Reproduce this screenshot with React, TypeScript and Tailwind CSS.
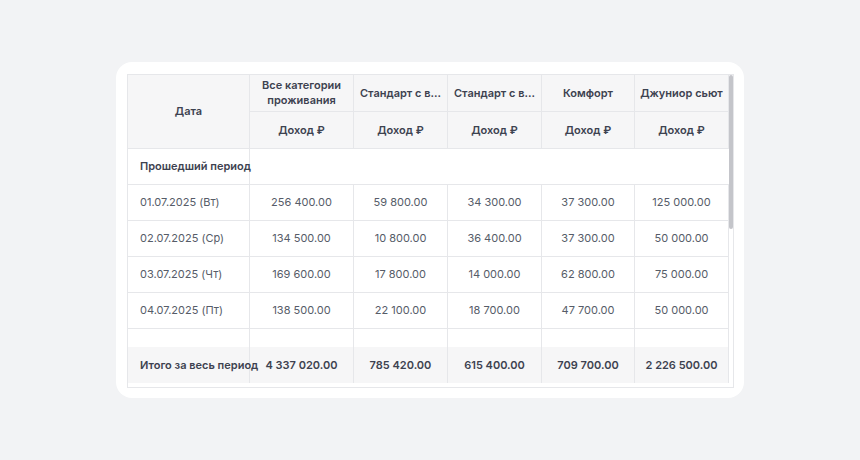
import React from 'react';

const cols = ['Все категории проживания', 'Стандарт с в...', 'Стандарт с в...', 'Комфорт', 'Джуниор сьют'];
const widths = ['w-[122px]', 'w-[104px]', 'w-[94px]', 'w-[94px]', 'w-[93px]', 'w-[94px]'];

const rows: [string, string[]][] = [
  ['01.07.2025 (Вт)', ['256 400.00', '59 800.00', '34 300.00', '37 300.00', '125 000.00']],
  ['02.07.2025 (Ср)', ['134 500.00', '10 800.00', '36 400.00', '37 300.00', '50 000.00']],
  ['03.07.2025 (Чт)', ['169 600.00', '17 800.00', '14 000.00', '62 800.00', '75 000.00']],
  ['04.07.2025 (Пт)', ['138 500.00', '22 100.00', '18 700.00', '47 700.00', '50 000.00']],
];
const totals = ['4 337 020.00', '785 420.00', '615 400.00', '709 700.00', '2 226 500.00'];

const cell = 'flex items-center justify-center border-r border-[#e6e7ea] text-center whitespace-nowrap';

export default function App() {
  return (
    <div className="w-[860px] h-[460px] bg-[#f2f3f5] flex items-start justify-start pt-[62px] pl-[116px] font-[Inter] text-[11px]">
      <div className="w-[628px] h-[336px] bg-white rounded-[16px] pt-[12px] pl-[11px]">
        <div className="w-[607px] h-[314px] border border-[#e6e7ea] flex">
          <div className="w-[601px] flex flex-col">
            {/* header */}
            <div className="flex h-[74px] bg-[#f6f6f7] border-b border-[#e6e7ea] font-semibold text-[#3d4250]">
              <div className={`${widths[0]} ${cell}`}>Дата</div>
              {cols.map((c, i) => (
                <div key={i} className={`${widths[i + 1]} flex flex-col border-r border-[#e6e7ea]`}>
                  <div className={`h-[37px] flex items-center justify-center text-center leading-[15px] px-1 border-b border-[#e6e7ea] ${i === 0 ? '' : 'whitespace-nowrap'}`}>{c}</div>
                  <div className="h-[36px] flex items-center justify-center">Доход ₽</div>
                </div>
              ))}
            </div>
            <div className="flex h-[36px] border-b border-[#e6e7ea] font-semibold text-[#3d4250]">
              <div className={`${widths[0]} flex items-center pl-3 border-r border-[#e6e7ea] whitespace-nowrap`}>Прошедший период</div>
              <div className="flex-1" />
            </div>
            {rows.map(([d, v]) => (
              <div key={d} className="flex h-[36px] border-b border-[#e6e7ea] text-[#565c68]">
                <div className={`${widths[0]} flex items-center pl-3 border-r border-[#e6e7ea] whitespace-nowrap`}>{d}</div>
                {v.map((x, i) => (
                  <div key={i} className={`${widths[i + 1]} ${cell}`}>{x}</div>
                ))}
              </div>
            ))}
            <div className="flex h-[18px]">
              {widths.map((w, i) => (
                <div key={i} className={`${w} border-r border-[#e6e7ea]`} />
              ))}
            </div>
            <div className="flex h-[36px] bg-[#f6f6f7] font-semibold text-[#3d4250]">
              <div className={`${widths[0]} flex items-center pl-3 border-r border-[#e6e7ea] whitespace-nowrap`}>Итого за весь период</div>
              {totals.map((x, i) => (
                <div key={i} className={`${widths[i + 1]} ${cell}`}>{x}</div>
              ))}
            </div>
          </div>
          <div className="w-[5px] flex flex-col">
            <div className="h-[154px] bg-[#c4c5ca] rounded-full" />
          </div>
        </div>
      </div>
    </div>
  );
}
